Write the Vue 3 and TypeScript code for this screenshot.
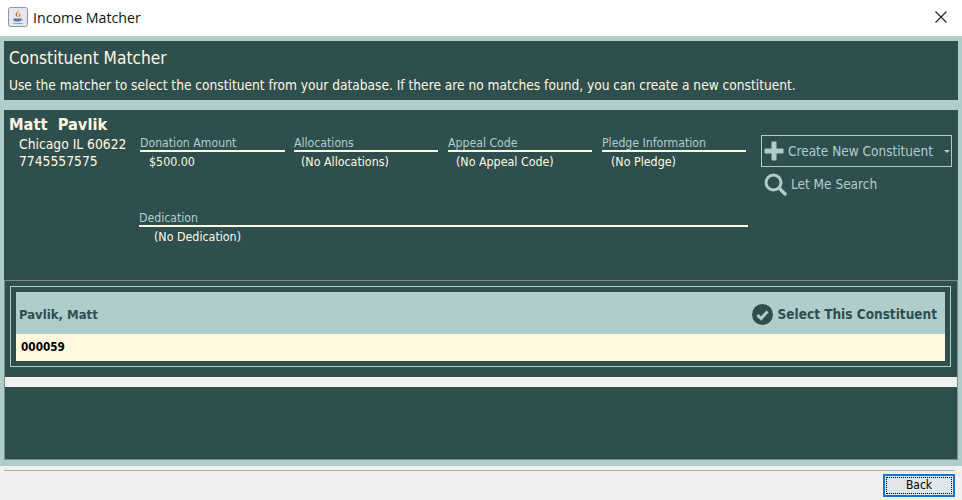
<script setup lang="ts">
interface Field { label: string; value: string; cls: string }
const fields: Field[] = [
  { label: 'Donation Amount', value: '$500.00', cls: 'f1' },
  { label: 'Allocations', value: '(No Allocations)', cls: 'f2' },
  { label: 'Appeal Code', value: '(No Appeal Code)', cls: 'f3' },
  { label: 'Pledge Information', value: '(No Pledge)', cls: 'f4' },
]
</script>

<template>
  <div class="window">
    <header class="titlebar">
      <svg class="java" width="20" height="20" viewBox="0 0 20 20">
        <rect x="0.5" y="0.5" width="19" height="19" rx="2" fill="#e4e8ee" stroke="#8b97a8" />
        <path d="M10.5 3c1 2-2 3-1.500 5 .2 1 1 1.500 1 2.500-1-.6-2.500-1.500-2.500-3 0-2 3-2.500 3-4.500z" fill="#d9641e" />
        <path d="M12 5.500c-.5 1.200-1.500 1.500-1.300 3 .1.700.6 1 .5 2 1-.8 1.600-1.500 1.200-2.500-.3-.8-.7-1.300-.4-2.500z" fill="#e58a3c" />
        <path d="M5.500 11.500h7.500v1.500c0 1-1 1.500-3.700 1.500s-3.800-.5-3.800-1.500z" fill="#4f7aa5" />
        <path d="M13 11.800c1.500-.4 2 1.400.2 1.800" fill="none" stroke="#4f7aa5" stroke-width="0.800" />
        <path d="M4 15.500c2 1.200 9 1.200 12 0-2 2-10 2-12 0z" fill="#4f7aa5" />
      </svg>
      <span class="title">Income Matcher</span>
      <svg class="close" width="12" height="12" viewBox="0 0 12 12">
        <path d="M.5.500l11 11M11.500.500l-11 11" stroke="#222" stroke-width="1.100" fill="none" />
      </svg>
    </header>

    <main class="body">
      <section class="intro">
        <h1>Constituent Matcher</h1>
        <p>Use the matcher to select the constituent from your database. If there are no matches found, you can create a new constituent.</p>
      </section>

      <section class="panel">
        <div class="donor">
          <div class="person">
            <div class="name">Matt&nbsp; Pavlik</div>
            <div class="addr">Chicago IL 60622</div>
            <div class="addr">7745557575</div>
          </div>

          <div class="fields">
            <div class="row-top">
              <div v-for="f in fields" :key="f.label" class="field" :class="f.cls">
                <div class="label">{{ f.label }}</div>
                <div class="value">{{ f.value }}</div>
              </div>
            </div>
            <div class="field dedication">
              <div class="label">Dedication</div>
              <div class="value">(No Dedication)</div>
            </div>
          </div>

          <div class="actions">
            <div class="create">
              <svg width="20" height="20" viewBox="0 0 20 20">
                <path d="M7.500 1.500a1 1 0 0 1 1-1h3a1 1 0 0 1 1 1v6h6a1 1 0 0 1 1 1v3a1 1 0 0 1-1 1h-6v6a1 1 0 0 1-1 1h-3a1 1 0 0 1-1-1v-6h-6a1 1 0 0 1-1-1v-3a1 1 0 0 1 1-1h6z" fill="#aecdcb" />
              </svg>
              <span>Create New Constituent</span>
              <i class="caret"></i>
            </div>
            <div class="search">
              <svg width="23" height="23" viewBox="0 0 23 23">
                <circle cx="9.500" cy="9.500" r="7.500" fill="none" stroke="#aecdcb" stroke-width="3" />
                <path d="M15 15l6 6" stroke="#aecdcb" stroke-width="3.400" stroke-linecap="round" />
              </svg>
              <span>Let Me Search</span>
            </div>
          </div>
        </div>

        <div class="results">
          <div class="card-frame">
            <div class="card">
              <div class="card-head">
                <span class="card-name">Pavlik, Matt</span>
                <span class="select">
                  <svg width="21" height="21" viewBox="0 0 21 21">
                    <circle cx="10.500" cy="10.500" r="10.500" fill="#2f4f4f" />
                    <path d="M5.500 11l3.500 3.500 6.500-7" fill="none" stroke="#aecdcb" stroke-width="3" />
                  </svg>
                  Select This Constituent
                </span>
              </div>
              <div class="card-id">000059</div>
            </div>
          </div>
          <div class="scrollbar"></div>
        </div>
      </section>
    </main>

    <footer class="footer">
      <div class="sep"></div>
      <div class="btn-row">
        <button class="back" type="button"><span>Back</span></button>
      </div>
    </footer>
  </div>
</template>

<style>
html, body { margin: 0; background: #f0f0f0; }
</style>

<style scoped>
.window {
  width: 962px;
  height: 500px;
  display: flex;
  flex-direction: column;
  overflow: hidden;
  font-family: "DejaVu Sans Condensed", "DejaVu Sans", sans-serif;
  font-size: 12px;
}
.titlebar {
  height: 36px;
  flex: none;
  box-sizing: border-box;
  background: #fff;
  display: flex;
  align-items: center;
  padding: 0 15px 2px 8px;
}
.java { flex: none; }
.title {
  margin-left: 5px;
  font: 14.2px "Open Sans", sans-serif;
  color: #111;
}
.close { margin-left: auto; }
.body {
  height: 430px;
  flex: none;
  box-sizing: border-box;
  background: #aecdcb;
  padding: 5px 4px 6px;
  display: flex;
  flex-direction: column;
  gap: 10px;
}
.intro {
  height: 59px;
  flex: none;
  box-sizing: border-box;
  background: #2f4f4f;
  color: #fff8e0;
  padding: 6px 5px 0;
}
.intro h1 {
  margin: 0;
  font-size: 17.2px;
  font-weight: 400;
  line-height: 22px;
}
.intro p {
  margin: 7px 0 0;
  font-size: 13.62px;
  line-height: 18px;
  white-space: nowrap;
}
.panel {
  flex: 1;
  background: #2f4f4f;
  display: flex;
  flex-direction: column;
}
.donor {
  height: 170px;
  flex: none;
  box-sizing: border-box;
  display: flex;
  color: #fff8e0;
}
.person { width: 135px; flex: none; padding: 6px 0 0 5px; box-sizing: border-box; }
.name { font-weight: 700; font-size: 16.3px; line-height: 18px; }
.addr { font-size: 13.75px; line-height: 17px; padding-left: 10px; }
.addr:nth-child(2) { margin-top: 2px; }
.fields { width: 610px; flex: none; }
.row-top { display: flex; padding: 26px 0 0 1px; box-sizing: border-box; height: 101px; }
.field { flex: none; }
.f1 { width: 145px; margin-right: 9px; }
.f2 { width: 144px; margin-right: 10px; }
.f3 { width: 144px; margin-right: 10px; }
.f4 { width: 144px; }
.f1 .value { padding-left: 9px; }
.f2 .value { padding-left: 7px; }
.f3 .value { padding-left: 8px; }
.f4 .value { padding-left: 9px; }
.label {
  color: #aecdcb;
  font-size: 12.2px;
  line-height: 14px;
  border-bottom: 2px solid #fff8e0;
}
.value { font-size: 12.35px; line-height: 15px; margin-top: 3px; }
.dedication { width: 609px; }
.dedication .value { padding-left: 15px; }
.actions { flex: none; margin-left: 12px; padding-top: 25px; color: #aecdcb; font-size: 13.5px; }
.create {
  width: 191px;
  height: 32px;
  box-sizing: border-box;
  border: 1px solid #aecdcb;
  display: flex;
  align-items: center;
  padding-left: 2px;
  gap: 4px;
  white-space: nowrap;
}
.create svg, .search svg, .select svg { flex: none; }
.caret {
  margin-left: 7px;
  border: 3px solid transparent;
  border-top-color: #aecdcb;
  margin-top: 3px;
}
.search { display: flex; align-items: center; margin: 4px 0 0 3px; gap: 4px; height: 26px; }
.results {
  flex: 1;
  box-sizing: border-box;
  border: 1px solid #7f8a8a;
  padding: 5px 0 0;
}
.card-frame {
  margin: 0 6px 0 5px;
  height: 81px;
  box-sizing: border-box;
  border: 1px solid #aecdcb;
  padding: 5px;
}
.card { height: 69px; display: flex; flex-direction: column; }
.card-head {
  height: 42px;
  box-sizing: border-box;
  background: #aecdcb;
  color: #2f4f4f;
  display: flex;
  align-items: center;
  justify-content: space-between;
  padding: 2px 8px 0 3px;
  font-weight: 700;
  font-size: 13px;
}
.select {
  display: flex;
  align-items: center;
  gap: 5px;
  font-size: 13.5px;
  white-space: nowrap;
}
.card-id {
  flex: 1;
  box-sizing: border-box;
  background: #fff8dc;
  color: #000;
  font-weight: 700;
  font-size: 11.7px;
  display: flex;
  align-items: center;
  padding: 0 0 2px 5px;
}
.scrollbar { height: 10px; margin-top: 10px; background: #f0f0f0; }
.footer { flex: 1; background: #f0f0f0; padding: 4px 7px 0 4px; }
.sep { height: 1px; background: #a9a9a9; }
.btn-row { display: flex; justify-content: flex-end; margin-top: 3px; }
.back {
  width: 72px;
  height: 23px;
  padding: 1px;
  box-sizing: border-box;
  border: 2px solid #0f78d4;
  background: #e1e6e8;
  font: 12px "DejaVu Sans Condensed", sans-serif;
  color: #000;
  display: flex;
}
.back span {
  flex: 1;
  border: 1px dotted #000;
  line-height: 15px;
  text-align: center;
}
</style>
